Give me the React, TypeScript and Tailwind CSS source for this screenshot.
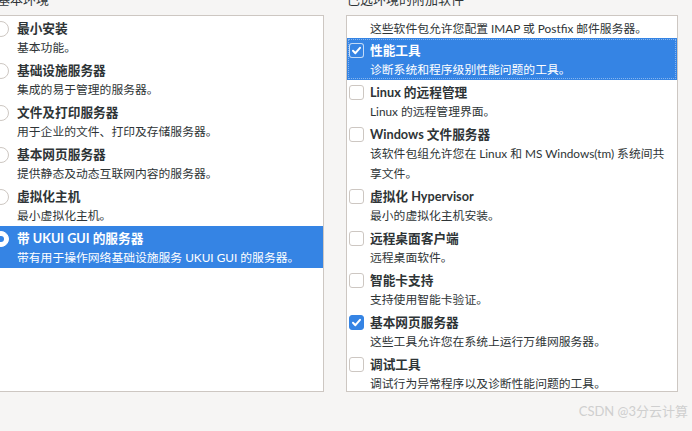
import React from "react";

type Env = { title: string; desc: string; selected?: boolean };
type Addon = { title?: string; desc: string[]; checked?: boolean; selected?: boolean };

const envs: Env[] = [
  { title: "最小安装", desc: "基本功能。" },
  { title: "基础设施服务器", desc: "集成的易于管理的服务器。" },
  { title: "文件及打印服务器", desc: "用于企业的文件、打印及存储服务器。" },
  { title: "基本网页服务器", desc: "提供静态及动态互联网内容的服务器。" },
  { title: "虚拟化主机", desc: "最小虚拟化主机。" },
  { title: "带 UKUI GUI 的服务器", desc: "带有用于操作网络基础设施服务 UKUI GUI 的服务器。", selected: true },
];

const addons: Addon[] = [
  { desc: ["这些软件包允许您配置 IMAP 或 Postfix 邮件服务器。"] },
  { title: "性能工具", desc: ["诊断系统和程序级别性能问题的工具。"], checked: true, selected: true },
  { title: "Linux 的远程管理", desc: ["Linux 的远程管理界面。"] },
  { title: "Windows 文件服务器", desc: ["该软件包组允许您在 Linux 和 MS Windows(tm) 系统间共", "享文件。"] },
  { title: "虚拟化 Hypervisor", desc: ["最小的虚拟化主机安装。"] },
  { title: "远程桌面客户端", desc: ["远程桌面软件。"] },
  { title: "智能卡支持", desc: ["支持使用智能卡验证。"] },
  { title: "基本网页服务器", desc: ["这些工具允许您在系统上运行万维网服务器。"], checked: true },
  { title: "调试工具", desc: ["调试行为异常程序以及诊断性能问题的工具。"] },
];

const Radio = ({ on }: { on?: boolean }) => (
  <div
    className={`mt-[2px] h-[16px] w-[16px] shrink-0 rounded-full border flex items-center justify-center ${
      on ? "border-white bg-white" : "border-[#cdc7c2] bg-white"
    }`}
  >
    {on && <div className="h-[6px] w-[6px] rounded-full bg-[#3584e4]" />}
  </div>
);

const Check = ({ on, selected }: { on?: boolean; selected?: boolean }) => (
  <div
    className={`mt-[2px] h-[15px] w-[15px] shrink-0 rounded-[3px] border flex items-center justify-center ${
      on
        ? selected
          ? "border-white/70 bg-[#3584e4]"
          : "border-[#3584e4] bg-[#3584e4]"
        : "border-[#cdc7c2] bg-white"
    }`}
  >
    {on && (
      <svg width="11" height="11" viewBox="0 0 11 11" fill="none">
        <path d="M2 5.8 L4.4 8.2 L9 2.8" stroke="white" strokeWidth="2" strokeLinecap="round" strokeLinejoin="round" />
      </svg>
    )}
  </div>
);

export default function App() {
  return (
    <div
      className="relative h-[431px] w-[692px] overflow-hidden bg-[#f6f5f4] text-[#2e3436]"
      style={{ fontFamily: 'Lato, "Noto Sans CJK SC", sans-serif' }}
    >
      <div className="flex gap-[22px]">
        {/* base environment */}
        <div className="ml-[-10px] flex w-[334px] flex-col">
          <div className="mt-[-11px] mb-[6px] pl-[7px] text-[13px] leading-[20px]">基本环境</div>
          <div className="h-[377px] border border-[#cdc7c2] bg-white">
            {envs.map((e) => (
              <div
                key={e.title}
                className={`flex gap-[8px] pl-[2px] pt-[3px] ${e.selected ? "bg-[#3584e4] text-white" : ""}`}
              >
                <Radio on={e.selected} />
                <div>
                  <div className="text-[12.7px] font-bold leading-[19px]">{e.title}</div>
                  <div className="text-[11.8px] leading-[20px]">{e.desc}</div>
                </div>
              </div>
            ))}
          </div>
        </div>

        {/* add-ons */}
        <div className="flex w-[332px] flex-col">
          <div className="mt-[-11px] mb-[6px] pl-[1px] text-[13px] leading-[20px]">已选环境的附加软件</div>
          <div className="h-[377px] overflow-hidden border border-[#cdc7c2] bg-white">
            {addons.map((a, i) =>
              a.title ? (
                <div
                  key={i}
                  className={`flex gap-[6px] pl-[2px] pt-[3px] ${
                    a.selected ? "bg-[#3584e4] text-white outline-1 outline-dotted outline-offset-[-2px] outline-white/40" : ""
                  }`}
                >
                  <Check on={a.checked} selected={a.selected} />
                  <div>
                    <div className="text-[12.7px] font-bold leading-[19px]">{a.title}</div>
                    {a.desc.map((d) => (
                      <div key={d} className="text-[11.8px] leading-[20px]">
                        {d}
                      </div>
                    ))}
                  </div>
                </div>
              ) : (
                <div key={i} className="pl-[23px] pt-[4px] text-[11.8px] leading-[18px]">
                  {a.desc[0]}
                </div>
              )
            )}
          </div>
        </div>
      </div>

      <div className="absolute bottom-[12px] right-[4px] text-[13px] leading-[16px] text-[#cfcfcf]">CSDN @3分云计算</div>
    </div>
  );
}
